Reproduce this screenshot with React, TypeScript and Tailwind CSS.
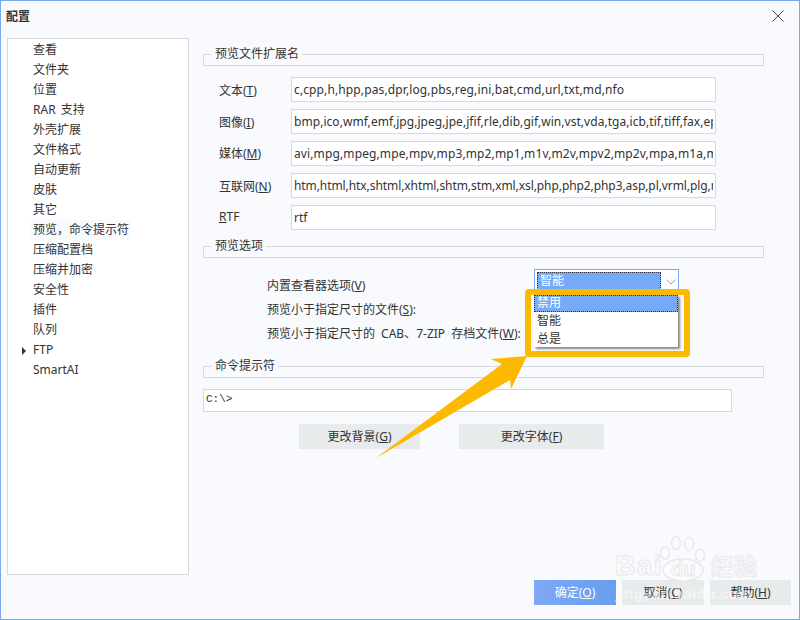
const font = "font-['Noto_Sans','Noto_Sans_CJK_SC',sans-serif]";

const treeItems = [
  "查看",
  "文件夹",
  "位置",
  "RAR 支持",
  "外壳扩展",
  "文件格式",
  "自动更新",
  "皮肤",
  "其它",
  "预览，命令提示符",
  "压缩配置档",
  "压缩并加密",
  "安全性",
  "插件",
  "队列",
  "FTP",
  "SmartAI",
];

const extRows = [
  { label: "文本(", key: "T", end: ")", nudge: "pt-[3px]", track: "tracking-[0.12px]", value: "c,cpp,h,hpp,pas,dpr,log,pbs,reg,ini,bat,cmd,url,txt,md,nfo" },
  { label: "图像(", key: "I", end: ")", nudge: "pt-[3px]", track: "tracking-[0.05px]", value: "bmp,ico,wmf,emf,jpg,jpeg,jpe,jfif,rle,dib,gif,win,vst,vda,tga,icb,tif,tiff,fax,eps,pcx,pcd" },
  { label: "媒体(", key: "M", end: ")", nudge: "", track: "tracking-[0.12px]", value: "avi,mpg,mpeg,mpe,mpv,mp3,mp2,mp1,m1v,m2v,mpv2,mp2v,mpa,m1a,m2a,wav,wma,wmv" },
  { label: "互联网(", key: "N", end: ")", nudge: "pt-[3px]", track: "tracking-[-0.08px]", value: "htm,html,htx,shtml,xhtml,shtm,stm,xml,xsl,php,php2,php3,asp,pl,vrml,plg,mht,mhtml" },
  { label: "", key: "R", end: "TF", nudge: "pb-[1px]", track: "", value: "rtf" },
];

function GroupHeader({ title }: { title: string }) {
  return (
    <div className="relative h-[12px] border border-[#d5d9dc]">
      <span className="absolute left-[8px] top-[-10px] bg-[#f9fafd] px-[3px] leading-[18px]">{title}</span>
    </div>
  );
}

function Btn({ label, k, primary, w }: { label: string; k: string; primary?: boolean; w: string }) {
  return (
    <div
      className={`flex h-[25px] items-center justify-center ${w} ${
        primary ? "bg-gradient-to-r from-[#7fa8f5] to-[#679ef0] text-white" : "bg-[#e8ebec]"
      }`}
    >
      {label}(<u>{k}</u>)
    </div>
  );
}

export default function App() {
  return (
    <div className={`relative h-[620px] w-[800px] overflow-hidden border border-[#7aa9f2] bg-[#f9fafd] text-[12px] text-[#333] [word-spacing:2px] ${font}`}>
      {/* Title */}
      <div className="flex h-[37px] items-start justify-between pl-[5px] pr-[15px] pt-[7px]">
        <span className="font-bold leading-[18px]">配置</span>
        <svg width="12" height="12" viewBox="0 0 12 12" className="mt-[2px]" stroke="#444" fill="none">
          <path d="M.5.5l11 11M11.5.5l-11 11" />
        </svg>
      </div>

      <div className="flex pl-[6px]">
        {/* Tree */}
        <div className="h-[537px] w-[182px] border border-[#d5d9dc] bg-white pt-[1px]">
          {treeItems.map((item, i) => (
            <div key={item} className="relative flex h-[20px] items-center pl-[25px]">
              {item === "FTP" && (
                <span className="absolute left-[14px] top-[7px] h-0 w-0 border-y-[4px] border-l-[4px] border-y-transparent border-l-[#333]" />
              )}
              <span className={`leading-[20px] ${i === 9 ? "bg-[#f9fafd] px-[2px] -ml-[2px]" : ""}`}>{item}</span>
            </div>
          ))}
        </div>

        {/* Right panel */}
        <div className="ml-[14px] w-[561px]">
          <div className="mt-[16px]">
            <GroupHeader title="预览文件扩展名" />
          </div>
          <div className="mt-[11px] flex flex-col gap-[7px]">
            {extRows.map((row) => (
              <div key={row.key} className="flex items-center">
                <div className={`w-[88px] pl-[16px] ${row.nudge}`}>
                  {row.label}
                  <u>{row.key}</u>
                  {row.end}
                </div>
                <div className="h-[25px] w-[425px] border border-[#d5d9dc] bg-white px-[2px]">
                  <div className={`overflow-hidden whitespace-nowrap leading-[23px] ${row.track}`}>{row.value}</div>
                </div>
              </div>
            ))}
          </div>

          <div className="mt-[16px]">
            <GroupHeader title="预览选项" />
          </div>
          <div className="flex pt-[11px]">
            <div className="w-[331px] pl-[64px] pt-[5px] leading-[24px]">
              <div>
                内置查看器选项(<u>V</u>)
              </div>
              <div>
                预览小于指定尺寸的文件(<u>S</u>):
              </div>
              <div className="[word-spacing:3px]">
                预览小于指定尺寸的 CAB、7-ZIP 存档文件(<u>W</u>):
              </div>
            </div>
            <div className="flex h-[24px] w-[145px] border border-[#7aa9f2] bg-white pl-[2px] pt-[2px]">
              <div className="h-[20px] w-[124px] border border-dotted border-[#333] bg-[#76a9f7] pl-[2px] leading-[16px] text-white">
                智能
              </div>
              <svg width="10" height="6" viewBox="0 0 10 6" className="ml-[5px] mt-[7px]" stroke="#8aa8e0" fill="none">
                <path d="M.5.5l4.5 4.5 4.5-4.5" />
              </svg>
            </div>
          </div>

          <div className="mt-[20px]">
            <GroupHeader title="命令提示符" />
          </div>
          <div className="mt-[11px] h-[23px] w-[529px] border border-[#d5d9dc] bg-white pl-[2px] font-['Liberation_Mono',monospace] text-[11px] leading-[19px]">
            C:\&gt;
          </div>
          <div className="mt-[12px] flex gap-[39px] pl-[96px]">
            <Btn label="更改背景" k="G" w="w-[121px]" />
            <Btn label="更改字体" k="F" w="w-[145px]" />
          </div>
        </div>
      </div>

      {/* Footer buttons */}
      <div className="mt-[5px] flex justify-end gap-[6px] pr-[8px]">
        <Btn label="确定" k="O" primary w="w-[82px]" />
        <Btn label="取消" k="C" w="w-[82px]" />
        <Btn label="帮助" k="H" w="w-[81px]" />
      </div>

      {/* Open dropdown with the orange highlight */}
      <div className="absolute left-[524px] top-[288px] h-[68px] w-[165px] rounded-[4px] border-[6px] border-[#fdb900] bg-[#f9fafd]">
        <div className="ml-[3px] h-[52px] w-[144px] bg-white shadow-[2px_2px_2px_#888]">
          <div className="h-[17px] border border-dotted border-[#333] bg-[#76a9f7] pl-[2px] leading-[14px] text-white">
            禁用
          </div>
          <div className="h-[18px] pl-[3px] leading-[18px]">智能</div>
          <div className="h-[17px] pl-[3px] leading-[17px]">总是</div>
        </div>
      </div>

      {/* Arrow */}
      <svg className="absolute left-[-1px] top-[-1px]" width="800" height="620" fill="#fdb900">
        <polygon points="376,458 502,364 491,359 527,356 511,389 510,380" />
      </svg>

      {/* Watermark */}
      <svg className="absolute left-[655px] top-[533px]" width="55" height="50" fill="#fbfbfd" stroke="#e8e9eb" strokeWidth="1.5">
        <ellipse cx="9" cy="19" rx="4.5" ry="6" />
        <ellipse cx="20" cy="9" rx="4.5" ry="6.5" />
        <ellipse cx="33" cy="10" rx="4.5" ry="6.5" />
        <ellipse cx="44" cy="21" rx="4.5" ry="6" />
        <ellipse cx="27" cy="36" rx="20" ry="11" />
      </svg>
      <div className="absolute left-[614px] top-[551px] flex items-center font-['Liberation_Sans',sans-serif] font-bold leading-none text-[#fbfbfd] [-webkit-text-stroke:1px_#e8e9eb]">
        <span className="text-[28px] tracking-[1.5px]">Bai</span>
        <span className="ml-[8px] mt-[6px] w-[33px] text-[20px]">du</span>
        <span className={`ml-[7px] text-[23px] ${font}`}>经验</span>
      </div>
      <div className="absolute left-[614px] top-[582px] font-['Liberation_Sans',sans-serif] text-[15px] font-bold tracking-[0.3px] text-white/50">
        jingyan.baidu.com
      </div>
    </div>
  );
}
